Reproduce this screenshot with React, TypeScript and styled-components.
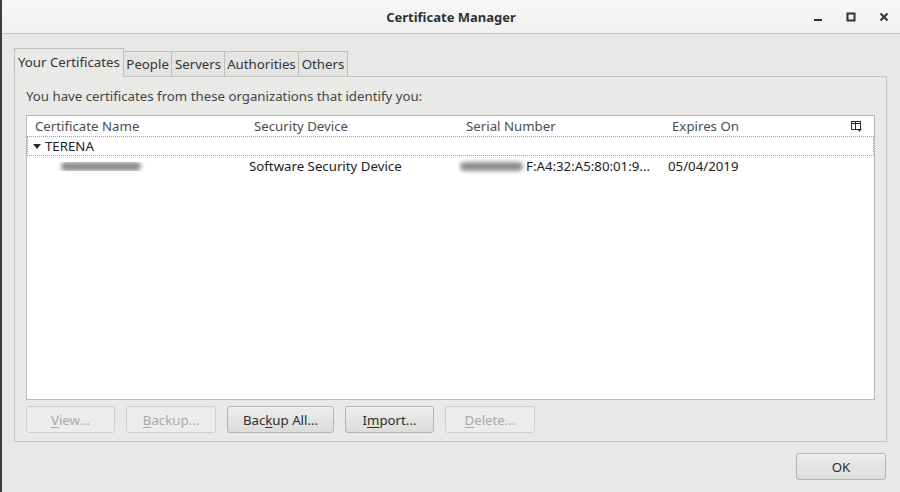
import styled, { createGlobalStyle } from "styled-components";

const GlobalStyle = createGlobalStyle`
  html, body {
    margin: 0;
    padding: 0;
    background: #e8e8e7;
  }
  body {
    font-family: "Noto Sans", "DejaVu Sans", sans-serif;
    font-size: 13.25px;
    color: #2e3436;
  }
`;

const Window = styled.div`
  width: 900px;
  height: 492px;
  display: flex;
  flex-direction: column;
  background: #e8e8e7;
  border-left: 2px solid #3a3d42;
  box-sizing: border-box;
  overflow: hidden;
`;

const TitleBar = styled.div`
  height: 33px;
  flex: none;
  display: grid;
  grid-template-columns: 1fr auto 1fr;
  align-items: center;
  background: linear-gradient(#f7f7f7, #f1f1f1);
  border-bottom: 1px solid #c4c4c4;
`;

const Title = styled.div`
  grid-column: 2;
  font-weight: 700;
  font-size: 13px;
  color: #2e3436;
  padding-top: 1px;
`;

const Controls = styled.div`
  grid-column: 3;
  justify-self: end;
  display: flex;
  align-items: center;
`;

const Ctl = styled.div`
  width: 33px;
  height: 24px;
  display: flex;
  align-items: center;
  justify-content: center;
`;

const Body = styled.div`
  flex: 1;
  display: flex;
  flex-direction: column;
  padding: 14px 13px 0 12px;
`;

const TabBar = styled.div`
  display: flex;
  align-items: flex-end;
  height: 28px;
  position: relative;
  z-index: 1;
`;

const Tab = styled.div<{ $active?: boolean }>`
  height: ${(p) => (p.$active ? "29px" : "25px")};
  box-sizing: border-box;
  padding: 0 ${(p) => (p.$active ? "3px" : "2.5px")} ${(p) => (p.$active ? "2px" : "0")};
  display: flex;
  align-items: center;
  font-size: 13.25px;
  color: #353535;
  background: ${(p) => (p.$active ? "#e9e9e8" : "#e4e4e3")};
  border: 1px solid #bdbdbc;
  border-bottom: ${(p) => (p.$active ? "1px solid #e9e9e8" : "none")};
  margin-left: ${(p) => (p.$active ? "0" : "-1px")};
  margin-bottom: ${(p) => (p.$active ? "-1px" : "0")};
`;

const Panel = styled.div`
  border: 1px solid #c3c3c2;
  background: #e9e9e8;
  padding: 10px 11px 8px 11px;
  display: flex;
  flex-direction: column;
`;

const Label = styled.div`
  color: #454545;
  line-height: 18px;
  margin-bottom: 10px;
`;

const Tree = styled.div`
  height: 285px;
  box-sizing: border-box;
  background: #fff;
  border: 1px solid #b9b9b8;
  display: flex;
  flex-direction: column;
`;

const Row = styled.div<{ $header?: boolean; $focus?: boolean }>`
  display: grid;
  grid-template-columns: 219px 210px 209px 1fr 28px;
  align-items: center;
  height: 20px;
  box-sizing: border-box;
  color: ${(p) => (p.$header ? "#4d4d4d" : "#222")};
  border: 1px ${(p) => (p.$focus ? "dotted #7aa6dc" : "solid transparent")};
`;

const HeadCell = styled.div<{ $pad?: number }>`
  padding-left: ${(p) => p.$pad ?? 7}px;
  white-space: nowrap;
  display: flex;
  align-items: center;
`;

const Cell = styled.div<{ $pad?: number }>`
  padding-left: ${(p) => p.$pad ?? 2}px;
  white-space: nowrap;
  overflow: hidden;
  display: flex;
  align-items: center;
`;

const Redacted = styled.span<{ $w: number }>`
  display: inline-block;
  flex: none;
  width: ${(p) => p.$w}px;
  height: 9px;
  margin: 0 3px;
  border-radius: 5px;
  background: #8e8e8e;
  filter: blur(2px);
`;

const Expander = styled.span`
  width: 0;
  height: 0;
  border-left: 4px solid transparent;
  border-right: 4px solid transparent;
  border-top: 5px solid #2a2a2a;
  margin: 0 4px 0 5px;
`;

const ButtonRow = styled.div`
  display: flex;
  gap: 11px;
  margin-top: 6px;
`;

const Button = styled.div<{ $w: number; $disabled?: boolean }>`
  width: ${(p) => p.$w}px;
  flex: none;
  height: 27px;
  box-sizing: border-box;
  display: flex;
  align-items: center;
  justify-content: center;
  border-radius: 3px;
  color: ${(p) => (p.$disabled ? "#a9a9a9" : "#2e2e2e")};
  border: 1px solid ${(p) => (p.$disabled ? "#cfcfce" : "#b3b3b2")};
  background: ${(p) =>
    p.$disabled ? "#ececeb" : "linear-gradient(#ededec, #dcdcdb)"};
  box-shadow: ${(p) => (p.$disabled ? "none" : "0 1px 0 #f4f4f4 inset")};
  & u {
    text-decoration-thickness: 1px;
    text-underline-offset: 2px;
  }
`;

const Footer = styled.div`
  display: flex;
  justify-content: flex-end;
  padding: 11px 1px 0 0;
`;

const ColIcon = () => (
  <svg width="12" height="11" viewBox="0 0 12 11">
    <rect x="0.5" y="0.5" width="9" height="8" fill="none" stroke="#2a2a2a" />
    <line x1="0.5" y1="2.5" x2="9.5" y2="2.5" stroke="#2a2a2a" />
    <line x1="4.5" y1="0.5" x2="4.5" y2="8.5" stroke="#2a2a2a" />
    <path d="M6 8 L11 8 L8.5 10.8 Z" fill="#2a2a2a" />
  </svg>
);

export default function App() {
  return (
    <>
      <GlobalStyle />
      <Window>
        <TitleBar>
          <Title>Certificate Manager</Title>
          <Controls>
            <Ctl>
              <svg width="10" height="10" viewBox="0 0 10 10">
                <rect x="1" y="7" width="8" height="2" fill="#2e3436" />
              </svg>
            </Ctl>
            <Ctl>
              <svg width="10" height="10" viewBox="0 0 10 10">
                <rect x="1.5" y="1.5" width="7" height="7" fill="none" stroke="#2e3436" strokeWidth="2" />
              </svg>
            </Ctl>
            <Ctl>
              <svg width="10" height="10" viewBox="0 0 10 10">
                <path d="M1.5 1.5 L8.5 8.5 M8.5 1.5 L1.5 8.5" stroke="#2e3436" strokeWidth="2" />
              </svg>
            </Ctl>
          </Controls>
        </TitleBar>
        <Body>
          <TabBar>
            <Tab $active>Your Certificates</Tab>
            <Tab>People</Tab>
            <Tab>Servers</Tab>
            <Tab>Authorities</Tab>
            <Tab>Others</Tab>
          </TabBar>
          <Panel>
            <Label>You have certificates from these organizations that identify you:</Label>
            <Tree>
              <Row $header>
                <HeadCell>Certificate Name</HeadCell>
                <HeadCell>Security Device</HeadCell>
                <HeadCell $pad={9}>Serial Number</HeadCell>
                <HeadCell $pad={6}>Expires On</HeadCell>
                <HeadCell $pad={6}>
                  <ColIcon />
                </HeadCell>
              </Row>
              <Row $focus>
                <Cell $pad={0}>
                  <Expander />
                  TERENA
                </Cell>
                <Cell />
                <Cell />
                <Cell />
                <Cell />
              </Row>
              <Row>
                <Cell $pad={30}>
                  <Redacted $w={80} />
                </Cell>
                <Cell>Software Security Device</Cell>
                <Cell $pad={0}>
                  <Redacted $w={63} />
                  F:A4:32:A5:80:01:9...
                </Cell>
                <Cell>05/04/2019</Cell>
                <Cell />
              </Row>
            </Tree>
            <ButtonRow>
              <Button $w={89} $disabled>
                <span><u>V</u>iew...</span>
              </Button>
              <Button $w={90} $disabled>
                <span><u>B</u>ackup...</span>
              </Button>
              <Button $w={107}>
                <span>Bac<u>k</u>up All...</span>
              </Button>
              <Button $w={89}>
                <span>I<u>m</u>port...</span>
              </Button>
              <Button $w={90} $disabled>
                <span><u>D</u>elete...</span>
              </Button>
            </ButtonRow>
          </Panel>
          <Footer>
            <Button $w={90}>OK</Button>
          </Footer>
        </Body>
      </Window>
    </>
  );
}
